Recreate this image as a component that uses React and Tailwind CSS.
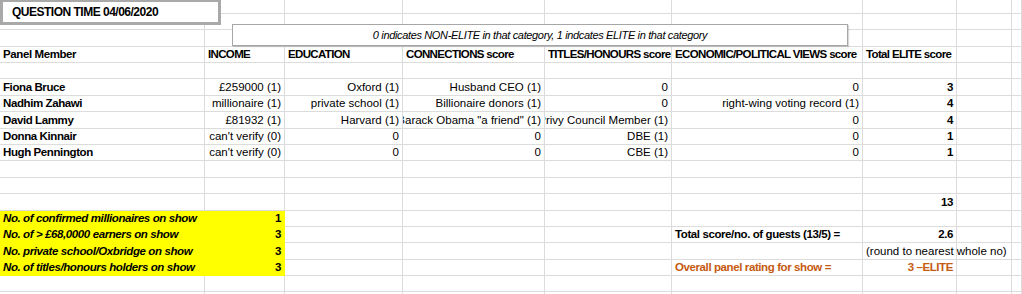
import React from 'react'

const grid = 'grid grid-cols-[205px_80px_118px_142px_127px_191px_94px_55px_1fr]'
const orange = 'text-[#c55a11]'

// one sheet cell; right-aligned text that is too long is clipped on its left side
function Cell({ children, right, bold, head, italic, clip, yellow, className = '' }) {
  let weight = ''
  if (head) weight = 'font-bold tracking-[-0.65px]'
  else if (bold) weight = 'font-bold tracking-[-0.4px]'

  return (
    <div
      className={`flex items-center border-r border-b px-[3px] whitespace-nowrap
                  ${yellow ? 'bg-[#ffff00] border-[#ffff00]' : 'border-[#dcdcdc]'}
                  ${right ? 'justify-end' : 'justify-start'}
                  ${clip ? 'overflow-hidden' : ''}
                  ${weight} ${italic ? 'italic' : ''} ${className}`}
    >
      {children !== undefined && <span className="shrink-0">{children}</span>}
    </div>
  )
}

function Row({ h, children }) {
  const filled = React.Children.toArray(children)
  while (filled.length < 9) filled.push(<Cell key={`e${filled.length}`} />)
  return <div className={`${grid} ${h}`}>{filled}</div>
}

const members = [
  ['Fiona Bruce', '£259000 (1)', 'Oxford (1)', 'Husband CEO (1)', '0', '0', '3', 'h-[17px]'],
  ['Nadhim Zahawi', 'millionaire (1)', 'private school (1)', 'Billionaire donors (1)', '0', 'right-wing voting record (1)', '4', 'h-[16px]'],
  ['David Lammy', '£81932 (1)', 'Harvard (1)', 'Barack Obama "a friend" (1)', 'Privy Council Member (1)', '0', '4', 'h-[17px]'],
  ['Donna Kinnair', "can't verify (0)", '0', '0', 'DBE (1)', '0', '1', 'h-[16px]'],
  ['Hugh Pennington', "can't verify (0)", '0', '0', 'CBE (1)', '0', '1', 'h-[16px]'],
]

export default function App() {
  return (
    <div className="relative w-[1022px] h-[294px] overflow-hidden bg-white text-black text-[11.5px] leading-[13px] font-['Liberation_Sans',Arial,sans-serif]">

      {/* sheet */}
      <Row h="h-[14px]" />
      <Row h="h-[16px]" />
      <Row h="h-[17px]" />
      <Row h="h-[16px]">
        <Cell bold>Panel Member</Cell>
        <Cell head>INCOME</Cell>
        <Cell head>EDUCATION</Cell>
        <Cell head>CONNECTIONS score</Cell>
        <Cell head>TITLES/HONOURS score</Cell>
        <Cell head>ECONOMIC/POLITICAL VIEWS score</Cell>
        <Cell head>Total ELITE score</Cell>
      </Row>
      <Row h="h-[16px]" />

      {members.map(([name, income, edu, conn, titles, views, total, h]) => (
        <Row key={name} h={h}>
          <Cell bold>{name}</Cell>
          <Cell right clip>{income}</Cell>
          <Cell right clip>{edu}</Cell>
          <Cell right clip>{conn}</Cell>
          <Cell right clip>{titles}</Cell>
          <Cell right clip>{views}</Cell>
          <Cell right bold>{total}</Cell>
        </Row>
      ))}

      <Row h="h-[17px]" />
      <Row h="h-[16px]" />
      <Row h="h-[17px]">
        <Cell /><Cell /><Cell /><Cell /><Cell /><Cell />
        <Cell right bold>13</Cell>
      </Row>

      <Row h="h-[16px]">
        <Cell yellow bold italic>No. of confirmed millionaires on show</Cell>
        <Cell yellow right bold>1</Cell>
      </Row>
      <Row h="h-[16px]">
        <Cell yellow bold italic>No. of &gt; £68,0000 earners on show</Cell>
        <Cell yellow right bold>3</Cell>
        <Cell /><Cell /><Cell />
        <Cell bold>Total score/no. of guests (13/5) =</Cell>
        <Cell right bold>2.6</Cell>
      </Row>
      <Row h="h-[17px]">
        <Cell yellow bold italic>No. private school/Oxbridge on show</Cell>
        <Cell yellow right bold>3</Cell>
        <Cell /><Cell /><Cell /><Cell />
        <Cell>(round to nearest whole no)</Cell>
      </Row>
      <Row h="h-[16px]">
        <Cell yellow bold italic>No. of titles/honours holders on show</Cell>
        <Cell yellow right bold>3</Cell>
        <Cell /><Cell /><Cell />
        <Cell bold className={orange}>Overall panel rating for show =</Cell>
        <Cell right bold className={orange}>3 –ELITE</Cell>
      </Row>
      <Row h="h-[16px]" />
      <Row h="h-[16px]" />

      {/* text boxes floating over the sheet */}
      <div className="absolute left-0 top-[-1px] w-[221px] h-[26px] bg-white border-[3px] border-[#a9a9a9] flex items-center pl-[9px] font-bold text-[12px] tracking-[-0.5px]">
        QUESTION TIME 04/06/2020
      </div>
      <div className="absolute left-[232px] top-[24px] w-[616px] h-[22px] bg-white border border-[#a6a6a6] shadow-[1px_1px_1px_rgba(0,0,0,0.15)] flex items-center justify-center italic text-[11px] tracking-[-0.35px]">
        0 indicates NON-ELITE in that category, 1 indcates ELITE in that category
      </div>
    </div>
  )
}
